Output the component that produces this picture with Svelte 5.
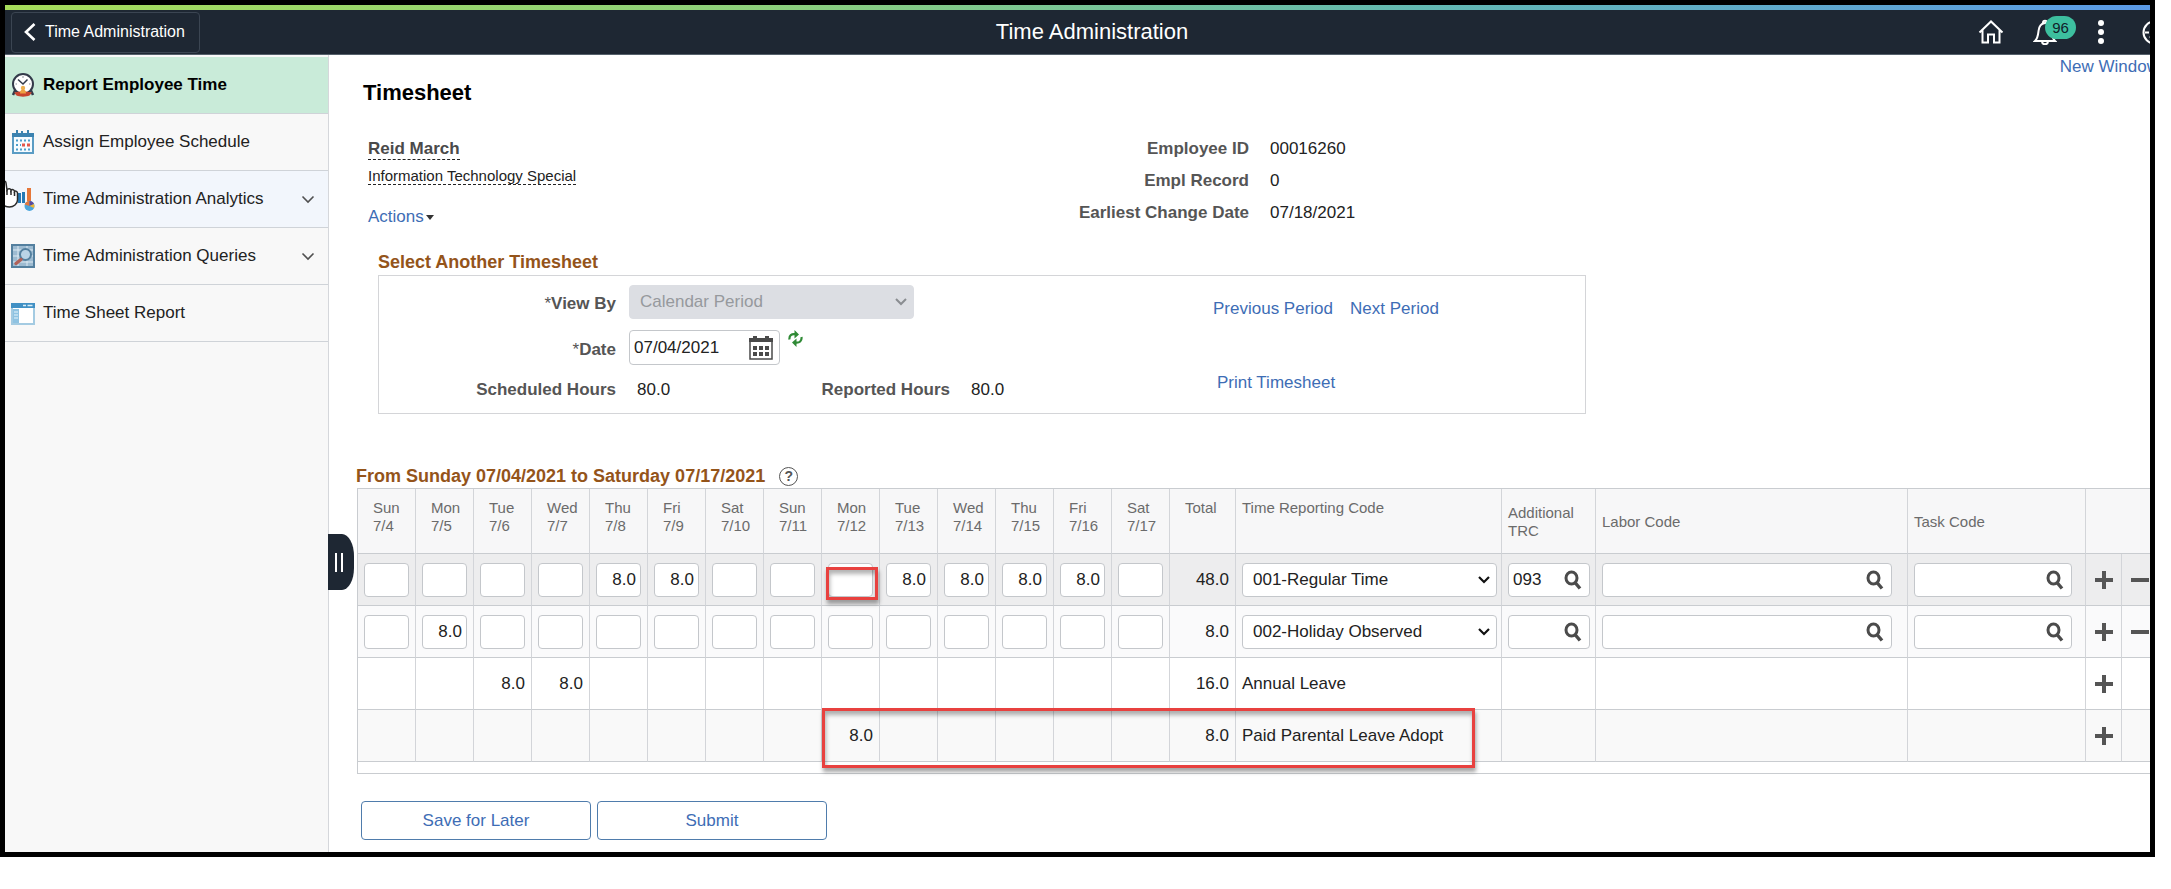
<script>
  const nav = [
    { label: 'Report Employee Time', icon: 'clock', active: true },
    { label: 'Assign Employee Schedule', icon: 'calendar' },
    { label: 'Time Administration Analytics', icon: 'chart', folder: true, hover: true },
    { label: 'Time Administration Queries', icon: 'query', folder: true },
    { label: 'Time Sheet Report', icon: 'report' }
  ];

  const days = [
    ['Sun', '7/4'], ['Mon', '7/5'], ['Tue', '7/6'], ['Wed', '7/7'], ['Thu', '7/8'],
    ['Fri', '7/9'], ['Sat', '7/10'], ['Sun', '7/11'], ['Mon', '7/12'], ['Tue', '7/13'],
    ['Wed', '7/14'], ['Thu', '7/15'], ['Fri', '7/16'], ['Sat', '7/17']
  ];

  const rows = [
    {
      hours: ['', '', '', '', '8.0', '8.0', '', '', '', '8.0', '8.0', '8.0', '8.0', ''],
      total: '48.0', code: '001-Regular Time', trc: '093', editable: true, marked: 8
    },
    {
      hours: ['', '8.0', '', '', '', '', '', '', '', '', '', '', '', ''],
      total: '8.0', code: '002-Holiday Observed', trc: '', editable: true
    },
    {
      hours: ['', '', '8.0', '8.0', '', '', '', '', '', '', '', '', '', ''],
      total: '16.0', code: 'Annual Leave'
    },
    {
      hours: ['', '', '', '', '', '', '', '', '8.0', '', '', '', '', ''],
      total: '8.0', code: 'Paid Parental Leave Adopt', marked: 8
    }
  ];
</script>

{#snippet lookup(label, value)}
  <div class="lookup">
    <input type="text" aria-label={label} {value} />
    <button type="button" aria-label="Look up {label}">
      <svg width="18" height="20" viewBox="0 0 18 20" fill="none" stroke="#4b4b4b">
        <ellipse cx="7.500" cy="8" rx="5.500" ry="6" stroke-width="3" />
        <path d="M11 12.500l5 6" stroke-width="3.400" />
      </svg>
    </button>
  </div>
{/snippet}

<div class="frame">
  <div class="page">
    <div class="stripe"></div>
    <header>
      <button type="button" class="back">
        <svg width="12" height="18" viewBox="0 0 12 18" fill="none" stroke="#fff" stroke-width="2.600">
          <path d="M10.500 1L2 9l8.500 8" />
        </svg>
        Time Administration
      </button>
      <div class="app-title">Time Administration</div>
      <div class="tools">
        <button type="button" aria-label="Home">
          <svg width="26" height="24" viewBox="0 0 26 24" fill="none" stroke="#fff" stroke-width="2">
            <path d="M1.500 12.500L13 1.500l11.500 11M4.500 10v12.500h5.500v-8h6v8h5.500V10" />
          </svg>
        </button>
        <button type="button" class="bell" aria-label="Notifications">
          <svg width="24" height="26" viewBox="0 0 24 26" fill="none" stroke="#fff" stroke-width="2">
            <path d="M2 22c3-3 3-5 3.500-10C6 7 8 4.500 12 4s6 3 6.500 8c.5 5 .5 7 3.500 10z" />
            <path d="M10 4c0-3 4-3 4 0M9 23c.5 3 5.500 3 6 0" />
          </svg>
          <span class="count">96</span>
        </button>
        <button type="button" aria-label="More actions">
          <svg width="8" height="24" viewBox="0 0 8 24" fill="#fff">
            <circle cx="4" cy="3" r="3" /><circle cx="4" cy="12" r="3" /><circle cx="4" cy="21" r="3" />
          </svg>
        </button>
        <button type="button" aria-label="Navigation bar">
          <svg width="25" height="25" viewBox="0 0 25 25" fill="none" stroke="#fff" stroke-width="2">
            <circle cx="12.500" cy="12.500" r="11" />
            <path d="M3 12.500h4M18 12.500h4M12.500 3v3M12.500 19v3M16 9l-2 5-5 2 2-5z" />
          </svg>
        </button>
      </div>
    </header>

    <div class="body">
      <nav>
        {#each nav as item}
          <a href="#nav" class:active={item.active} class:hover={item.hover}>
            <svg width="24" height="24" viewBox="0 0 24 24" fill="none">
              {#if item.icon === 'clock'}
                <path d="M4.500 16.500L2 22M19.500 16.500l2.500 5.500" stroke="#333a4a" stroke-width="2.500" />
                <circle cx="12" cy="11" r="10" fill="#fff" stroke="#333a4a" stroke-width="2" />
                <path d="M12 3v2M4.500 11h1.500M18 11h1.500" stroke="#8b909a" />
                <path d="M7 6.500l5 4.500 4.500-4.500" stroke="#333a4a" stroke-width="1.500" />
                <path d="M3 19.500c4-1.500 14-1.500 18 0l-2.500 3c-3 1.500-10 1.500-13 0z" fill="#c8442f" />
                <circle cx="12" cy="15" r="2.200" fill="#eeb04f" />
                <path d="M9 20.500c0-3 1.200-4 3-4s3 1 3 4z" fill="#eda042" />
              {:else if item.icon === 'calendar'}
                <rect x="2" y="4" width="20" height="19" fill="#f5fbff" stroke="#5a9cc4" stroke-width="2" />
                <path d="M1 3h22v4H1z" fill="#3b82b0" />
                <path d="M6 0v4M11 1v3M17 0v4" stroke="#3b82b0" stroke-width="2" />
                <path d="M5 10.500h14M5 15h5M5 19.500h14" stroke="#4b9dcb" stroke-width="2" stroke-dasharray="2 2" />
                <path d="M11 15h3M16 15h3" stroke="#e2574c" stroke-width="3" />
              {:else if item.icon === 'chart'}
                <path d="M2 8h3v9H2zM7 6h3v10H7zM11 5h3v11h-3z" fill="#2479b5" />
                <path d="M16 1h4v13h-4z" fill="#e5773a" />
                <circle cx="18.500" cy="19" r="5" fill="#4ba6dc" />
                <path d="M18.500 19l-4.800-1.500A5 5 0 0 1 18.500 14z" fill="#e5773a" />
                <path d="M18.500 19v-5a5 5 0 0 1 4.500 3z" fill="#5b4a9c" />
                <path d="M18.500 19l4.500-2a5 5 0 0 1 0 4z" fill="#f2b632" />
              {:else if item.icon === 'query'}
                <rect x="1" y="1" width="22" height="22" fill="#9dbbd1" stroke="#54809f" stroke-width="2" />
                <path d="M2 6h20M2 12h20M2 18h20M7 2v20M16 2v20" stroke="#dce9f2" />
                <circle cx="14.500" cy="10.500" r="5.500" fill="#b9d3e6" stroke="#54809f" stroke-width="2" />
                <path d="M10 15.500l-5 4" stroke="#b0625a" stroke-width="3.500" stroke-linecap="round" />
              {:else}
                <rect x="1" y="3" width="22" height="20" fill="#fff" stroke="#a4cbe2" stroke-width="2" />
                <path d="M0 2h24v5H0z" fill="#4190c4" />
                <path d="M12 4.500h3M16.500 4.500h5" stroke="#d9edf8" stroke-width="1.500" />
                <path d="M2 8h6v14H2z" fill="#8fc3e2" />
                <path d="M3 11h4M3 14h4M3 17h4" stroke="#e6f4fb" />
              {/if}
            </svg>
            <span>{item.label}</span>
            {#if item.folder}
              <svg width="14" height="9" viewBox="0 0 14 9" fill="none" stroke="#505050" stroke-width="1.600">
                <path d="M1.500 1.500L7 7l5.500-5.500" />
              </svg>
            {/if}
          </a>
        {/each}
        <svg class="pointer" width="16" height="28" viewBox="0 0 16 28" fill="#fff" stroke="#2c2c2c" stroke-width="1.500">
          <path d="M-4 3c0-2 5-3 5 0l1 7c1-2 4-1.500 4 .5 1-1.500 3.500-1 3.500 1 1-1 3 0 3 1.500V20c0 4-4 7-8 7-3 0-6-1-9-4z" />
          <path d="M2 10v5M6 11v4M9.500 12v4" />
        </svg>
        <button type="button" class="handle" aria-label="Collapse navigation"><i></i><i></i></button>
      </nav>

      <main>
        <a class="link new-window" href="#window">New Window</a>
        <h1>Timesheet</h1>

        <div class="summary">
          <div class="person">
            <strong>Reid March</strong>
            <span class="job">Information Technology Special</span>
            <button type="button" class="link actions">
              Actions<svg width="8" height="5" viewBox="0 0 8 5"><path d="M0 0h8L4 5z" fill="#333" /></svg>
            </button>
          </div>
          <dl>
            <dt>Employee ID</dt><dd>00016260</dd>
            <dt>Empl Record</dt><dd>0</dd>
            <dt>Earliest Change Date</dt><dd>07/18/2021</dd>
          </dl>
        </div>

        <section class="selector">
          <h2>Select Another Timesheet</h2>
          <div class="panel">
            <div class="fields">
              <label class="low" for="view-by"><span class="star">*</span>View By</label>
              <div class="wide select disabled">
                <select id="view-by" disabled><option>Calendar Period</option></select>
                <svg width="12" height="8" viewBox="0 0 12 8" fill="none" stroke="#8a8d91" stroke-width="2">
                  <path d="M1 1l5 5 5-5" />
                </svg>
              </div>
              <label class="low" for="date"><span class="star">*</span>Date</label>
              <div class="wide date-row">
                <div class="date">
                  <input id="date" type="text" value="07/04/2021" />
                  <button type="button" aria-label="Choose a date">
                    <svg width="24" height="24" viewBox="0 0 24 24" fill="none">
                      <rect x="1" y="3" width="22" height="20" fill="#fff" stroke="#4a4a4a" stroke-width="1.500" />
                      <path d="M0 2h24v4H0z" fill="#4a4a4a" />
                      <path d="M4 0h4v4H4zM16 0h4v4h-4z" fill="#4a4a4a" />
                      <path d="M4 12h16M4 18h16" stroke="#4a4a4a" stroke-width="4" stroke-dasharray="4 2" />
                    </svg>
                  </button>
                </div>
                <button type="button" class="refresh" aria-label="Refresh">
                  <svg width="15" height="17" viewBox="0 0 15 17" fill="none" stroke="#2f8a35" stroke-width="2.200">
                    <path d="M1.500 9.500C1 5.500 3.500 3.500 7.500 4.200" />
                    <path d="M13.500 7c.5 4-2 6.200-6 5.600" />
                    <path d="M6.500 0L11 4.500l-4.500 4zM8.500 8.500L4 12.500l4.500 4.500z" fill="#2f8a35" stroke="none" />
                  </svg>
                </button>
              </div>
              <span class="name">Scheduled Hours</span>
              <span class="value">80.0</span>
              <span class="name">Reported Hours</span>
              <span class="value">80.0</span>
            </div>
            <div class="links">
              <div><a class="link" href="#previous">Previous Period</a><a class="link" href="#next">Next Period</a></div>
              <div class="print"><a class="link" href="#print">Print Timesheet</a></div>
            </div>
          </div>
        </section>

        <div class="grid-title">
          <h2>From Sunday 07/04/2021 to Saturday 07/17/2021</h2>
          <button type="button" class="help" aria-label="Help"><b>?</b></button>
        </div>

        <div class="grid">
          <table>
            <colgroup>
              {#each days as _}<col class="c-day" />{/each}
              <col class="c-total" /><col class="c-code" /><col class="c-trc" /><col />
              <col class="c-task" /><col class="c-add" /><col class="c-remove" />
            </colgroup>
            <thead>
              <tr>
                {#each days as [name, date]}<th class="day" scope="col">{name}<br />{date}</th>{/each}
                <th class="day" scope="col">Total</th>
                <th class="top" scope="col">Time Reporting Code</th>
                <th scope="col">Additional TRC</th>
                <th scope="col">Labor Code</th>
                <th scope="col">Task Code</th>
                <th colspan="2"></th>
              </tr>
            </thead>
            <tbody>
              {#each rows as row, r}
                <tr>
                  {#each row.hours as hours, d}
                    <td class="num" class:marked={row.marked === d}>
                      {#if row.editable}
                        <input class="hours" type="text" value={hours} aria-label="{days[d][0]} {days[d][1]}" />
                      {:else}{hours}{/if}
                      {#if row.marked === d}<span class="mark" class:long={!row.editable}></span>{/if}
                    </td>
                  {/each}
                  <td class="num">{row.total}</td>
                  <td class="field">
                    {#if row.editable}
                      <div class="select">
                        <select aria-label="Time Reporting Code"><option>{row.code}</option></select>
                        <svg width="12" height="8" viewBox="0 0 12 8" fill="none" stroke="#111" stroke-width="2.200">
                          <path d="M1 1l5 5 5-5" />
                        </svg>
                      </div>
                    {:else}{row.code}{/if}
                  </td>
                  <td class="field">{#if row.editable}{@render lookup('Additional TRC', row.trc)}{/if}</td>
                  <td class="field labor">{#if row.editable}{@render lookup('Labor Code', '')}{/if}</td>
                  <td class="field task">{#if row.editable}{@render lookup('Task Code', '')}{/if}</td>
                  <td class="op">
                    <button type="button" aria-label="Add row {r + 1}">
                      <svg width="18" height="18" viewBox="0 0 18 18"><path d="M7 0h4v7h7v4h-7v7H7v-7H0V7h7z" fill="#555" /></svg>
                    </button>
                  </td>
                  <td class="op remove">
                    {#if row.editable}
                      <button type="button" aria-label="Delete row {r + 1}">
                        <svg width="18" height="18" viewBox="0 0 18 18"><path d="M0 7h18v4H0z" fill="#555" /></svg>
                      </button>
                    {/if}
                  </td>
                </tr>
              {/each}
            </tbody>
          </table>
        </div>

        <div class="buttons">
          <button type="button">Save for Later</button>
          <button type="button">Submit</button>
        </div>
      </main>
    </div>
  </div>
</div>

<style>
  :global(body) {
    background: #fff;
  }
  .frame, .frame * {
    box-sizing: border-box;
  }
  .frame {
    display: flex;
    margin: 0 16px 32px 0;
    min-height: calc(100vh - 32px);
    border: 5px solid #000;
    overflow: hidden;
    font: 17px/20px "Liberation Sans", Arial, sans-serif;
    color: #222;
  }
  .page {
    flex: none;
    width: calc(100% + 29px);
    display: flex;
    flex-direction: column;
  }
  button, input, select {
    font: inherit;
    color: inherit;
    margin: 0;
    padding: 0;
    border: 0;
    background: none;
  }
  svg {
    display: block;
    flex: none;
  }
  a {
    text-decoration: none;
    color: inherit;
  }
  h1, h2, dl, dd {
    margin: 0;
  }
  .link {
    color: #3e6db5;
  }

  .stripe {
    height: 5px;
    background: linear-gradient(90deg, #a6dc5a, #8ccf7a 35%, #62b8b0 65%, #5a97e6);
  }
  header {
    display: grid;
    grid-template-columns: 1fr auto 1fr;
    align-items: center;
    height: 45px;
    padding: 0 12px;
    background: #1e2733;
    border-bottom: 1px solid #55606b;
    color: #fff;
  }
  .back {
    justify-self: start;
    display: flex;
    align-items: center;
    gap: 9px;
    height: 41px;
    margin-left: -6px;
    padding: 0 14px 0 12px;
    border: 1px solid #3b4552;
    border-radius: 4px;
    font-size: 16px;
  }
  .app-title {
    font-size: 22px;
    line-height: 26px;
  }
  .tools {
    justify-self: end;
    display: flex;
    align-items: center;
  }
  .tools button {
    margin-left: 37px;
  }
  .tools .bell {
    display: flex;
    align-items: center;
    margin-left: 29px;
  }
  .tools .bell + button {
    margin-left: 21px;
  }
  .count {
    margin: -9px 0 0 -12px;
    width: 31px;
    height: 23px;
    border-radius: 12px;
    background: #3dbf9f;
    color: #10202a;
    font-size: 15px;
    line-height: 23px;
    text-align: center;
  }

  .body {
    flex: 1;
    display: grid;
    grid-template-columns: 324px minmax(0, 1fr);
  }
  nav {
    position: relative;
    background: #f8f8f8;
    border-right: 1px solid #d5d7db;
    padding-top: 2px;
  }
  nav a {
    display: flex;
    align-items: center;
    gap: 8px;
    height: 57px;
    padding: 0 13px 0 6px;
    border-bottom: 1px solid #cfd3d8;
  }
  nav a span {
    flex: 1;
  }
  nav .active {
    background: #c9ebd9;
    font-weight: bold;
    color: #000;
  }
  nav .hover {
    background: #f2f6fc;
  }
  .pointer {
    position: absolute;
    left: 0;
    top: 125px;
  }
  .handle {
    position: absolute;
    left: 100%;
    top: 479px;
    display: flex;
    align-items: center;
    gap: 4px;
    width: 26px;
    height: 56px;
    padding-left: 7px;
    background: #1e2733;
    border-radius: 0 12px 12px 0 / 0 22px 22px 0;
  }
  .handle i {
    width: 2px;
    height: 19px;
    background: #fff;
  }

  main {
    display: flex;
    flex-direction: column;
    padding: 2px 0 10px 27px;
  }
  .new-window {
    align-self: flex-end;
    margin-right: 20px;
  }
  h1 {
    margin: 4px 0 0 7px;
    font-size: 22px;
    line-height: 24px;
    color: #000;
  }
  h2 {
    font-size: 18px;
    line-height: 22px;
    color: #94541a;
  }
  .summary {
    display: grid;
    grid-template-columns: 653px auto;
    justify-content: start;
    margin-top: 28px;
  }
  .person {
    display: flex;
    flex-direction: column;
    align-items: flex-start;
    padding: 6px 0 0 12px;
  }
  .person strong, .job {
    border-bottom: 1px dashed #222;
  }
  .person strong {
    color: #4a4a4a;
  }
  .job {
    margin-top: 7px;
    font-size: 15px;
    line-height: 17px;
  }
  .actions {
    display: flex;
    align-items: center;
    gap: 2px;
    margin-top: 22px;
  }
  dl {
    display: grid;
    grid-template-columns: 240px auto;
    grid-auto-rows: 32px;
    column-gap: 21px;
    line-height: 32px;
  }
  dt, label, .name {
    font-weight: bold;
    color: #555;
    text-align: right;
  }
  .selector {
    margin: 22px 0 0 22px;
  }
  .panel {
    display: flex;
    gap: 150px;
    width: 1208px;
    margin-top: 2px;
    padding: 9px 0 10px;
    border: 1px solid #d4d5d8;
  }
  .fields {
    display: grid;
    grid-template-columns: 237px 170px 138px 100px;
    grid-template-rows: 34px 35px 27px;
    gap: 11px 13px;
    align-items: center;
  }
  .low {
    padding-top: 4px;
  }
  .star {
    font-weight: normal;
  }
  .wide {
    grid-column: 2 / -1;
  }
  .value {
    padding-left: 8px;
  }
  .select {
    display: grid;
    align-items: center;
  }
  .select > * {
    grid-area: 1 / 1;
  }
  .select select {
    appearance: none;
    width: 100%;
    height: 34px;
    padding: 0 10px;
    border: 1px solid #c4c7cb;
    border-radius: 4px;
    background: #fff;
    opacity: 1;
  }
  .select svg {
    justify-self: end;
    margin-right: 7px;
    pointer-events: none;
  }
  .disabled {
    width: 285px;
  }
  .disabled select {
    background: #dcdee3;
    border-color: #dcdee3;
    color: #96999d;
  }
  .date-row {
    display: flex;
    align-items: flex-start;
    gap: 8px;
  }
  .date, .lookup {
    display: flex;
    align-items: center;
    height: 34px;
    border: 1px solid #c4c7cb;
    border-radius: 4px;
    background: #fff;
  }
  .date {
    width: 151px;
    height: 35px;
    padding: 0 6px 0 4px;
  }
  .date input, .lookup input {
    flex: 1;
    min-width: 0;
  }
  .links {
    display: flex;
    flex-direction: column;
    gap: 54px;
    padding-top: 14px;
  }
  .links div {
    display: flex;
    gap: 17px;
  }
  .links .print {
    padding-left: 4px;
  }

  .grid-title {
    display: flex;
    align-items: center;
    gap: 14px;
    margin-top: 51px;
  }
  .help {
    width: 19px;
    height: 19px;
    border: 1px solid #555;
    border-radius: 50%;
    color: #555;
    font-size: 14px;
    line-height: 17px;
  }
  .grid {
    margin: 1px 0 0 1px;
    border: 1px solid #c9ccd0;
    border-right: 0;
    padding-bottom: 11px;
  }
  table {
    width: 100%;
    min-width: 1822px;
    table-layout: fixed;
    border-collapse: separate;
    border-spacing: 0;
  }
  .c-day { width: 58px; }
  .c-total { width: 66px; }
  .c-code { width: 266px; }
  .c-trc { width: 94px; }
  .c-task { width: 178px; }
  .c-add { width: 36px; }
  .c-remove { width: 58px; }
  th, td {
    border-right: 1px solid #d3d5d9;
    border-bottom: 1px solid #c9ccd0;
  }
  th {
    height: 65px;
    padding: 2px 5px 0 6px;
    background: #f7f7f8;
    color: #6b6b6b;
    font-size: 15px;
    font-weight: normal;
    line-height: 18px;
    text-align: left;
  }
  th.day, th.top {
    padding-top: 10px;
    vertical-align: top;
  }
  th.day {
    padding-left: 15px;
    padding-right: 0;
  }
  td {
    height: 52px;
    padding: 0 6px;
  }
  tbody tr:nth-child(1) td {
    background: #ededee;
  }
  tbody tr:nth-child(2) td {
    background: #fafafb;
  }
  tbody tr:nth-child(4) td {
    background: #f9f9f9;
  }
  .num {
    text-align: right;
  }
  .num:has(input) {
    padding-right: 5px;
  }
  .hours {
    display: block;
    width: 45px;
    height: 34px;
    padding-right: 4px;
    border: 1px solid #c4c7cb;
    border-radius: 4px;
    background: #fff;
    text-align: right;
  }
  .field .select {
    width: 255px;
  }
  .field .lookup {
    width: 82px;
    padding: 0 7px 0 4px;
  }
  .labor .lookup {
    width: calc(100% - 9px);
  }
  .task .lookup {
    width: 158px;
  }
  .op {
    padding: 0;
  }
  .op button {
    display: block;
    margin: 0 auto;
  }
  .remove button {
    margin: 0 0 0 9px;
  }
  .marked {
    position: relative;
  }
  .mark {
    position: absolute;
    z-index: 1;
    left: 4px;
    top: 13px;
    width: 52px;
    height: 33px;
    border: 3px solid #e8413f;
    box-shadow: 1px 4px 4px rgba(0, 0, 0, 0.35), inset 1px 4px 4px rgba(0, 0, 0, 0.3);
    pointer-events: none;
  }
  .mark.long {
    left: 0;
    top: -2px;
    width: 653px;
    height: 60px;
  }

  .buttons {
    display: flex;
    gap: 6px;
    margin: 27px 0 0 5px;
  }
  .buttons button {
    width: 230px;
    height: 39px;
    border: 1px solid #4f7cac;
    border-radius: 4px;
    background: #fff;
    color: #3e6db5;
  }
</style>
